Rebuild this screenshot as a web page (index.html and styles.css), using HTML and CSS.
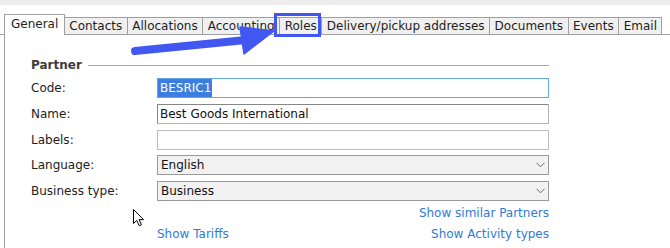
FILE: index.html
```html
<!DOCTYPE html>
<html lang="en">

<head>
    <meta charset="UTF-8">
    <meta name="viewport" content="width=device-width, initial-scale=1.0">
    <title>Partner</title>
    <link rel="stylesheet" href="styles.css">
</head>

<body>
    <div class="topbar"></div>

    <div class="tabs">
        <div class="tab active">General</div>
        <div class="tab">Contacts</div>
        <div class="tab">Allocations</div>
        <div class="tab">Accounting</div>
        <div class="tab">Roles</div>
        <div class="tab">Delivery/pickup addresses</div>
        <div class="tab">Documents</div>
        <div class="tab">Events</div>
        <div class="tab">Email</div>
    </div>

    <div class="panel">
        <div class="group-title">
            <span>Partner</span>
            <div class="rule"></div>
        </div>

        <div class="form">
            <div class="label">Code:</div>
            <div class="field focused"><span class="selected">BESRIC1</span></div>

            <div class="label">Name:</div>
            <div class="field">Best Goods International</div>

            <div class="label">Labels:</div>
            <div class="field light"></div>

            <div class="label">Language:</div>
            <div class="field combo">
                <span>English</span>
                <svg width="9" height="6" viewBox="0 0 9 6"><polyline points="0.5,0.8 4.5,4.8 8.5,0.8" fill="none" stroke="#6a6a6a" stroke-width="1"/></svg>
            </div>

            <div class="label">Business type:</div>
            <div class="field combo">
                <span>Business</span>
                <svg width="9" height="6" viewBox="0 0 9 6"><polyline points="0.5,0.8 4.5,4.8 8.5,0.8" fill="none" stroke="#6a6a6a" stroke-width="1"/></svg>
            </div>
        </div>

        <div class="links">
            <div class="link-row right">
                <a href="#">Show similar Partners</a>
            </div>
            <div class="link-row">
                <a href="#">Show Tariffs</a>
                <a href="#">Show Activity types</a>
            </div>
        </div>
    </div>

    <!-- annotation drawn over the screenshot -->
    <svg class="annotation" width="670" height="248" viewBox="0 0 670 248">
        <rect x="275.5" y="14.5" width="44" height="21" fill="none" stroke="#4257f2" stroke-width="3"/>
        <line x1="135" y1="51" x2="246" y2="40" stroke="#4257f2" stroke-width="8" stroke-linecap="round"/>
        <polygon points="240,27 244,54 274,31" fill="#4257f2" stroke="#4257f2" stroke-width="1.5" stroke-linejoin="round"/>
    </svg>

    <svg class="cursor" width="12" height="18" viewBox="0 0 12 18">
        <path d="M0.5 0.5 L0.5 14.5 L3.8 11.4 L6.2 16.8 L8.4 15.8 L6.1 10.6 L10.5 10.6 Z" fill="#fff" stroke="#000" stroke-width="1" stroke-linejoin="round"/>
    </svg>
</body>

</html>
```

FILE: styles.css
```css
body {
    margin: 0;
    font-family: "DejaVu Sans", Verdana, sans-serif;
    font-size: 12px;
    line-height: 14px;
    color: #222;
    background-color: #fff;
    height: 248px;
    overflow: hidden;
    position: relative;
}

.topbar {
    height: 5px;
    background-color: #ededed;
}

.tabs {
    display: flex;
    align-items: flex-end;
    height: 20px;
    margin-top: 9px;
    padding-left: 4px;
    border-bottom: 1px solid #a0a0a0;
}

.tab {
    height: 16px;
    line-height: 16px;
    padding: 0 4.5px;
    border: 1px solid #a0a0a0;
    border-bottom: none;
    background-color: #f0f0f0;
    color: #1e1e1e;
    margin-left: -1px;
    white-space: nowrap;
}

.tab:first-child {
    margin-left: 0;
    padding: 0 5.5px 0 6px;
}

.tab.active {
    height: 20px;
    line-height: 18px;
    background-color: #fff;
    margin-bottom: -1px;
    position: relative;
    z-index: 1;
}

.panel {
    margin-left: 4px;
    border-left: 1px solid #a0a0a0;
    height: 213px;
    padding: 23px 0 0 26px;
    box-sizing: border-box;
}

.group-title {
    display: flex;
    align-items: center;
    gap: 6px;
    width: 518px;
    font-weight: bold;
    color: #3c3c3c;
}

.group-title .rule {
    flex: 1;
    border-top: 1px solid #a8a8a8;
}

.form {
    display: grid;
    grid-template-columns: 126px 392px;
    grid-auto-rows: 20px;
    row-gap: 5.75px;
    margin-top: 6px;
    align-items: center;
}

.label {
    color: #222;
}

.field {
    height: 20px;
    box-sizing: border-box;
    border: 1px solid;
    border-color: #878787 #b4b4b4 #b4b4b4 #878787;
    background-color: #fff;
    padding: 0 2px;
    line-height: 18px;
    color: #111;
    white-space: nowrap;
}

.field.light {
    border-color: #bcbcbc;
}

.field.focused {
    border-color: #63a6e8;
    padding: 0;
}

.field .selected {
    display: inline-block;
    background-color: #3b7de0;
    color: #fff;
    padding: 0 1px 0 2px;
    height: 18px;
}

.field.combo {
    display: flex;
    justify-content: space-between;
    align-items: center;
    background-color: #f2f2f2;
    border-color: #9a9a9a;
    padding: 0 3px 0 3px;
}

.links {
    margin: 5px 0 0 126px;
    width: 392px;
    display: flex;
    flex-direction: column;
    gap: 7px;
}

.link-row {
    display: flex;
    justify-content: space-between;
}

.link-row.right {
    justify-content: flex-end;
}

.links a {
    color: #2f7bd8;
    text-decoration: none;
}

.annotation {
    position: absolute;
    left: 0;
    top: 0;
    z-index: 5;
    pointer-events: none;
}

.cursor {
    position: absolute;
    left: 133px;
    top: 209px;
    z-index: 6;
}
```
